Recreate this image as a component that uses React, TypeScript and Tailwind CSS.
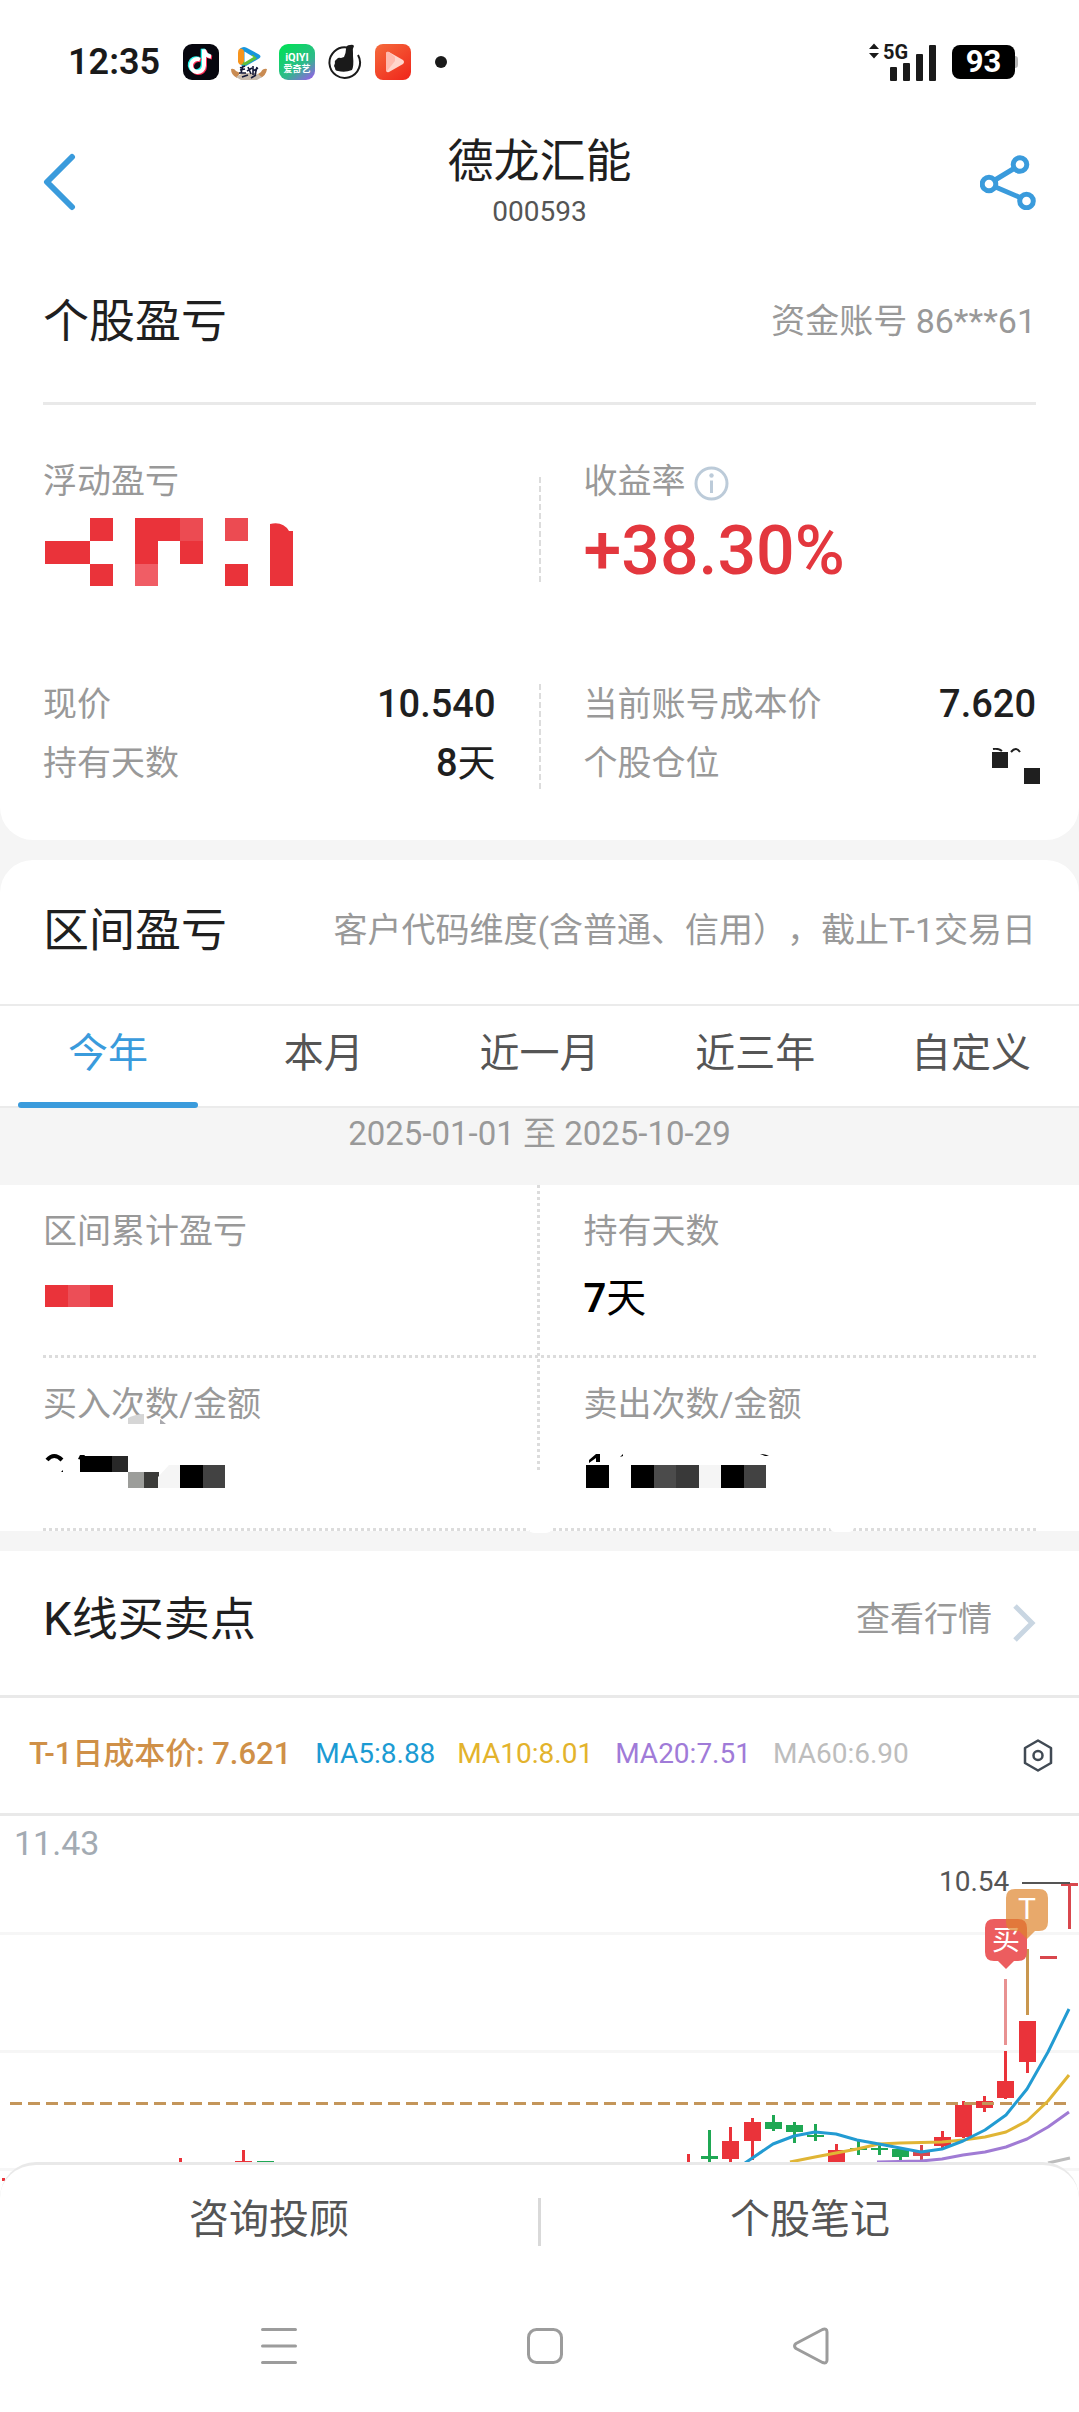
import React, { useState } from "react";

const FONT = "font-['Roboto','Noto_Sans_CJK_SC',sans-serif]";
const LABEL = "text-[34px] leading-[48px] text-[#999999]";
const TITLE = "text-[46px] leading-[52px] text-[#1f1f1f]";
const DOTS_X = "h-[3px] bg-[repeating-linear-gradient(90deg,#dcdcdc_0_3px,transparent_3px_6px)]";
const DOTS_Y = "w-[3px] bg-[repeating-linear-gradient(180deg,#dcdcdc_0_3px,transparent_3px_6px)]";
const DASH_Y = "w-[2px] bg-[repeating-linear-gradient(180deg,#dcdcdc_0_6px,transparent_6px_9px)]";

type Tile = [x: number, y: number, w: number, h: number, fill: string];

function Tiles({ tiles }: { tiles: Tile[] }) {
  return (
    <>
      {tiles.map(([x, y, w, h, fill]) => (
        <rect key={`${x}-${y}`} x={x} y={y} width={w} height={h} fill={fill} shapeRendering="crispEdges" />
      ))}
    </>
  );
}

function StatusBar() {
  return (
    <div className="flex h-[124px] items-center justify-between bg-white pl-[68px] pr-[61px] text-[#1a1a1a]">
      <div className="flex items-center">
        <span className="w-[115px] text-[36px] font-semibold leading-[40px]">12:35</span>
        <div className="flex items-center gap-3">
          <svg className="size-9" viewBox="0 0 36 36" aria-hidden="true">
            <rect width="36" height="36" rx="9" fill="#07070f" />
            <g fill="none" strokeWidth="4">
              <path d="M17 15.5a6.500 6.500 0 1 0 4 6V5.500c.5 4 3 6.500 7 7" stroke="#25f4ee" transform="translate(-1.300 -.8)" />
              <path d="M17 15.500a6.500 6.500 0 1 0 4 6V5.500c.5 4 3 6.500 7 7" stroke="#fe2c55" transform="translate(1 1)" />
              <path d="M17 15.500a6.500 6.500 0 1 0 4 6V5.500c.5 4 3 6.500 7 7" stroke="#ffffff" />
            </g>
          </svg>
          <svg className="size-9" viewBox="0 0 36 36" aria-hidden="true">
            <path d="M9 4.500q4-3 8 0l11 6q3 2 0 4L15 22q-5 1-6-3z" fill="#1796dd" />
            <path d="M9 4.500q-2 1-2 4v9q1 4 4 3l2-1V7q-1-3-4-2.500z" fill="#f7941d" />
            <path d="M11 20.500q2 2 5 0l10-6-4-4-9 7z" fill="#5fbf3a" />
            <path d="M13.500 7.500l9 5.500-9 5.500z" fill="#fff" />
            <path d="M0 25q3-1 5 2l4 2-3 5q-6-3-6-9zM36 25q-4-1-6 3l-3 2 2 4q6-2 7-9z" fill="#c98b52" />
            <path d="M5 33l7-4 13 0 6 4-5 3H10z" fill="#c9bcae" />
            <path d="M9 24l5-2m-2 0l-2 7m-1-3l5-1m-6 4h7M17 23l3 7m-4-3l5-3m1-2v9m0-4l5-3m-3 7l2-8m-15 10l6-2m3 3l5-3" stroke="#141a3a" strokeWidth="1.600" fill="none" />
          </svg>
          <svg className="size-9" viewBox="0 0 36 36" aria-hidden="true">
            <defs>
              <linearGradient id="iq" x1=".3" y1="0" x2="1" y2="1">
                <stop offset="0" stopColor="#06dc5c" />
                <stop offset=".55" stopColor="#2fb98a" />
                <stop offset="1" stopColor="#a352f5" />
              </linearGradient>
            </defs>
            <rect width="36" height="36" rx="9" fill="url(#iq)" />
            <text x="18" y="17" fontSize="11" fontWeight="700" fill="#fff" textAnchor="middle">iQIYI</text>
            <text x="18" y="27.500" fontSize="9" fontWeight="700" fill="#fff" textAnchor="middle">爱奇艺</text>
          </svg>
          <svg className="size-9" viewBox="0 0 36 36" aria-hidden="true">
            <path d="M20 3.500A15.300 15.300 0 1 0 31 11" fill="none" stroke="#1a1a1a" strokeWidth="2" />
            <path d="M10 15q1-2 4-1l3-1q2-4 2-8 0-4 4-4 3-1 4 1-2 3-1 7l0 3q1 10-1 14-7 3-14 1-3 0-3-3l-1-2 1-3q-1-2 2-4z" fill="#1a1a1a" />
          </svg>
          <svg className="size-9" viewBox="0 0 36 36" aria-hidden="true">
            <defs>
              <linearGradient id="vd" x1="0" y1="0" x2=".8" y2="1">
                <stop offset="0" stopColor="#f56b3c" />
                <stop offset="1" stopColor="#f02a1d" />
              </linearGradient>
            </defs>
            <rect width="36" height="36" rx="8" fill="url(#vd)" />
            <path d="M11 10q0-3 3-2l14 8q2 2 0 4l-14 8q-3 1-3-2z" fill="#ffd5cd" />
            <path d="M11 10q0-3 3-2l6 5v4L12 27q-1 0-1-1z" fill="#ffb9ad" />
          </svg>
        </div>
        <span className="ml-6 size-3 rounded-full bg-[#1a1a1a]" />
      </div>
      <div className="flex items-center gap-4">
        <svg className="h-[46px] w-[67px] -mt-2" viewBox="0 -8 67 46" fill="#1a1a1a" aria-label="5G">
          <path d="M0 6l5-5.500L10 6zM0 10l5 5.500L10 10z" />
          <text x="14" y="16" fontSize="20" fontWeight="700">5G</text>
          <rect x="21" y="24" width="7" height="14" rx="1" />
          <rect x="34" y="20" width="7" height="18" rx="1" />
          <rect x="47" y="11" width="7" height="27" rx="1" />
          <rect x="60" y="2" width="7" height="36" rx="1" />
        </svg>
        <div className="flex items-center">
          <span className="flex h-[34px] w-[63px] items-center justify-center rounded-[8px] bg-black text-[31px] font-bold leading-[34px] text-white">93</span>
          <span className="h-3 w-[3px] rounded-r-[3px] bg-[#b5b5b5]" />
        </div>
      </div>
    </div>
  );
}

function Header() {
  return (
    <header className="grid h-[116px] grid-cols-[1fr_auto_1fr] items-center bg-white px-[43px]">
      <button aria-label="返回" className="justify-self-start">
        <svg className="h-[58px] w-[33px]" viewBox="0 0 33 58" fill="none" stroke="#3a9bdc" strokeWidth="6" strokeLinecap="round" strokeLinejoin="round">
          <path d="M29 4L4 29l25 25" />
        </svg>
      </button>
      <div className="text-center">
        <h1 className={TITLE}>德龙汇能</h1>
        <p className="mt-2 text-[28px] leading-[34px] text-[#555555]">000593</p>
      </div>
      <button aria-label="分享" className="justify-self-end">
        <svg className="h-[56px] w-[56px]" viewBox="0 0 56 56" fill="none" stroke="#3a9bdc" strokeWidth="5">
          <circle cx="9" cy="30" r="6.800" />
          <circle cx="40" cy="10.500" r="6.800" />
          <circle cx="46.500" cy="47" r="6.800" />
          <path d="M15 26l19-11.500M15.500 33l24.500 10.500" />
        </svg>
      </button>
    </header>
  );
}

function PositionCard() {
  return (
    <section className="rounded-b-[33px] bg-white px-[43px] pb-[47px]">
      <div className="flex h-[162px] items-center justify-between">
        <h2 className={TITLE}>个股盈亏</h2>
        <span className={LABEL}>资金账号 86***61</span>
      </div>
      <div className="h-[3px] bg-[#e9e9e9]" />
      <div className="mt-[52px] grid grid-cols-[1fr_2px_1fr] gap-x-[43px]">
        <div>
          <p className={LABEL}>浮动盈亏</p>
          <svg className="ml-[2px] mt-[13px] h-[68px] w-[248px]" viewBox="0 0 248 68" role="img" aria-label="已隐藏">
            <Tiles
              tiles={[
                [45, 0, 23, 23, "#ea333a"], [90, 0, 45, 23, "#ea333a"], [135, 0, 23, 23, "#ec4b52"], [180, 0, 23, 23, "#ec4b52"],
                [0, 23, 45, 23, "#ea333a"], [90, 23, 23, 23, "#ea333a"], [135, 23, 23, 23, "#ea333a"],
                [45, 46, 23, 22, "#ea333a"], [90, 46, 23, 22, "#f05d65"], [180, 46, 23, 22, "#ea333a"],
              ]}
            />
            <path d="M225 68V6q13-3 19 7h4v55z" fill="#ea333a" />
          </svg>
        </div>
        <div className={`mt-5 h-[108px] ${DASH_Y}`} />
        <div>
          <p className={`flex items-center gap-2 ${LABEL}`}>
            收益率
            <button aria-label="收益率说明">
              <svg className="mt-1 size-[35px]" viewBox="0 0 35 35" fill="none" stroke="#bccbd9" strokeWidth="3">
                <circle cx="17.500" cy="17.500" r="15.500" />
                <path d="M17.500 14.500V27" />
                <circle cx="17.500" cy="9.500" r="2.200" fill="#bccbd9" stroke="none" />
              </svg>
            </button>
          </p>
          <p className="text-[68px] font-medium leading-[92px] text-[#e3373e]">+38.30%</p>
        </div>
      </div>
      <div className="mt-[78px] grid grid-cols-[1fr_2px_1fr] gap-x-[43px]">
        <dl className="grid grid-cols-[auto_1fr] leading-[59px]">
          <dt className="text-[34px] text-[#999999]">现价</dt>
          <dd className="text-right text-[38px] font-medium text-[#1f1f1f]">10.540</dd>
          <dt className="text-[34px] text-[#999999]">持有天数</dt>
          <dd className="text-right text-[38px] text-[#1f1f1f]"><span className="font-medium">8</span>天</dd>
        </dl>
        <div className={`mt-[9px] h-[108px] ${DASH_Y}`} />
        <dl className="grid grid-cols-[auto_1fr] leading-[59px]">
          <dt className="text-[34px] text-[#999999]">当前账号成本价</dt>
          <dd className="text-right text-[38px] font-medium text-[#1f1f1f]">7.620</dd>
          <dt className="text-[34px] text-[#999999]">个股仓位</dt>
          <dd className="flex justify-end pt-[14px]">
            <svg className="-mr-1 h-[36px] w-[48px]" viewBox="0 0 48 36" role="img" aria-label="已隐藏">
              <Tiles tiles={[[0, 4, 16, 16, "#1f1f1f"], [32, 20, 16, 16, "#1f1f1f"]]} />
              <path d="M1 1q5-1 9 2M19 4q5-6 9 0" fill="none" stroke="#1f1f1f" strokeWidth="2" />
            </svg>
          </dd>
        </dl>
      </div>
    </section>
  );
}

const TABS = ["今年", "本月", "近一月", "近三年", "自定义"];

function RangeCard() {
  const [active, setActive] = useState(0);
  return (
    <section className="mt-5 rounded-t-[33px] bg-white">
      <div className="flex h-[144px] items-center justify-between px-[43px] pb-1">
        <h2 className={TITLE}>区间盈亏</h2>
        <span className={`whitespace-nowrap [text-spacing-trim:space-all] ${LABEL}`}>客户代码维度(含普通、信用），截止T-1交易日</span>
      </div>
      <div role="tablist" className="grid h-[104px] grid-cols-5 border-y-2 border-[#ebebeb]">
        {TABS.map((tab, i) => (
          <button
            key={tab}
            role="tab"
            aria-selected={i === active}
            onClick={() => setActive(i)}
            className={`relative pb-1 text-[40px] leading-[48px] ${i === active ? "text-[#3a9bdc]" : "text-[#555555]"}`}
          >
            {tab}
            {i === active && <span className="absolute inset-x-[18px] -bottom-[2px] h-[6px] rounded-full bg-[#3a9bdc]" />}
          </button>
        ))}
      </div>
      <p className="h-[77px] bg-[#f5f5f5] text-center text-[33px] leading-[52px] text-[#999999]">2025-01-01 至 2025-10-29</p>
      <div className="relative px-[43px]">
        <div className={`absolute left-1/2 top-0 -ml-[3px] h-[285px] ${DOTS_Y}`} />
        <div className="grid h-[170px] grid-cols-2 gap-x-[88px] pt-[22px]">
          <div>
            <p className={LABEL}>区间累计盈亏</p>
            <svg className="ml-[2px] mt-[30px] h-[22px] w-[68px]" viewBox="0 0 68 22" role="img" aria-label="已隐藏">
              <Tiles tiles={[[0, 0, 23, 22, "#ea333a"], [23, 0, 22, 22, "#ec4e57"], [45, 0, 23, 22, "#ea333a"]]} />
            </svg>
          </div>
          <div>
            <p className={LABEL}>持有天数</p>
            <p className="mt-4 text-[40px] leading-[56px] text-black"><span className="font-semibold">7</span>天</p>
          </div>
        </div>
        <div className={DOTS_X} />
        <div className="grid h-[170px] grid-cols-2 gap-x-[88px] pt-[22px]">
          <div>
            <p className={LABEL}>买入次数/金额</p>
            <svg className="-mt-[14px] ml-[2px] h-[74px] w-[180px]" viewBox="0 0 180 74" role="img" aria-label="已隐藏">
              <Tiles
                tiles={[
                  [35, 42, 32, 16, "#000000"], [67, 42, 16, 16, "#282828"],
                  [83, 58, 16, 16, "#9c9d9a"], [99, 58, 15, 16, "#3b3b39"],
                  [135, 51, 23, 23, "#000000"], [158, 51, 22, 23, "#424242"],
                ]}
              />
              <path d="M113 74V63l11-12h11v23z" fill="#f5f5f5" />
              <path d="M83 10V4q8-4 16-4v10z" fill="#d6d6d6" />
              <path d="M115 10V5l6 5z" fill="#a9a9ae" />
              <path d="M2 46q7-8 15 0" fill="none" stroke="#000000" strokeWidth="4" />
              <path d="M33 45l2-4h5l-3 5zM18 56v2h-2z" fill="#000000" />
            </svg>
          </div>
          <div>
            <p className={LABEL}>卖出次数/金额</p>
            <svg className="ml-[2px] mt-[26px] h-[34px] w-[184px]" viewBox="0 0 184 34" role="img" aria-label="已隐藏">
              <Tiles
                tiles={[
                  [0, 11, 23, 23, "#000000"], [45, 11, 23, 23, "#000000"], [68, 11, 22, 23, "#4b4b4b"], [90, 11, 23, 23, "#393939"],
                  [113, 11, 22, 23, "#f5f5f5"], [135, 11, 23, 23, "#000000"], [158, 11, 22, 23, "#424242"],
                ]}
              />
              <path d="M3 9V6l7-6h4v8h-4V4zM34 3l3-3v2zM174 0q6 0 9 2h-4z" fill="#000000" />
            </svg>
          </div>
        </div>
        <div className={DOTS_X} />
        <span className="absolute -bottom-[2px] left-1/2 -ml-[12px] h-[6px] w-[24px] rounded-b-full bg-white" />
        <span className="absolute -bottom-px left-[78%] -ml-[12px] h-[5px] w-[24px] rounded-b-full bg-white" />
      </div>
    </section>
  );
}

const RED = "#ea333a";
const GREEN = "#1fa854";

// Centre x, high, low, body top, body bottom, colour
const CANDLES: [number, number, number, number, number, string][] = [
  [180, 2158, 2180, 2170, 2180, RED],
  [243, 2150, 2180, 2161, 2180, RED],
  [265, 2161, 2180, 2161, 2180, GREEN],
  [688, 2154, 2180, 2172, 2180, RED],
  [709, 2130, 2170, 2156, 2159, GREEN],
  [730, 2127, 2170, 2141, 2159, RED],
  [752, 2118, 2160, 2122, 2141, RED],
  [773, 2115, 2131, 2122, 2129, GREEN],
  [794, 2122, 2143, 2125, 2132, GREEN],
  [815, 2124, 2141, 2135, 2137, GREEN],
  [836, 2144, 2170, 2150, 2170, RED],
  [858, 2141, 2155, 2148, 2150, GREEN],
  [879, 2145, 2155, 2148, 2150, GREEN],
  [900, 2147, 2161, 2149, 2157, GREEN],
  [921, 2145, 2160, 2152, 2156, "#d9474d"],
  [942, 2131, 2149, 2137, 2146, RED],
  [963, 2101, 2138, 2105, 2137, RED],
  [984, 2096, 2112, 2101, 2108, RED],
  [1005, 2051, 2099, 2081, 2098, RED],
  [1027, 2021, 2073, 2021, 2062, RED],
  [1048, 1956, 1959, 1956, 1959, "#d9474d"],
  [1069, 1883, 1929, 1883, 1886, "#d9474d"],
];

function KLineChart() {
  return (
    <svg className="block h-auto w-full" viewBox="0 1816 1079 394" role="img" aria-label="K线图">
      <g fill="#f6f6f6">
        <rect y="1932" width="1079" height="3" />
        <rect y="2050" width="1079" height="3" />
        <rect y="2168" width="1079" height="3" />
      </g>
      <text x="14" y="1855" fontSize="34" fill="#a3abb3">11.43</text>
      <text x="939" y="1891" fontSize="28" fill="#555555">10.54</text>
      <rect x="2" y="2178" width="3" height="3" fill={RED} />
      {CANDLES.map(([x, high, low, top, bottom, color]) => (
        <g key={x} fill={color}>
          <rect x={x - 1} y={high} width="3" height={low - high} />
          <rect x={x - 8} y={top} width="17" height={bottom - top} />
        </g>
      ))}
      <rect x="1022" y="1882" width="48" height="2" fill="#555555" />
      <path d="M10 2103.500H1068" stroke="#c4965a" strokeWidth="3" strokeDasharray="12 6" />
      <g fill="none" strokeWidth="3" strokeLinejoin="round">
        <path stroke="#bdbdbd" d="M1048 2163L1070 2158" />
        <path stroke="#a07bd4" d="M877 2162L921 2161L942 2159L963 2155L985 2152L1006 2147L1027 2139L1048 2127L1069 2112" />
        <path stroke="#e0b535" d="M790 2162L815 2157L836 2153L857 2149L879 2144L900 2143L942 2142L963 2140L985 2137L1006 2132L1027 2121L1048 2101L1069 2075" />
        <path stroke="#229bd2" d="M745 2163L773 2144L794 2136L815 2132L836 2134L857 2140L879 2144L900 2148L921 2152L942 2149L963 2141L985 2130L1006 2115L1027 2089L1048 2052L1069 2009" />
        <path stroke="#e89292" d="M1005.500 1979V2045" />
        <path stroke="#c9974f" d="M1027.500 1949V2015" />
      </g>
      <path d="M994 1919h24q9 0 9 9v24q0 9-9 9h-4l-8 8-8-8h-4q-9 0-9-9v-24q0-9 9-9z" fill="#ec5d5f" />
      <text x="1006" y="1950" fontSize="28" fill="#ffffff" textAnchor="middle">买</text>
      <path d="M1015 1889h24q9 0 9 9v24q0 9-9 9h-4l-8 8-8-8h-4q-9 0-9-9v-24q0-9 9-9z" fill="#de852c" fillOpacity="0.7" />
      <text x="1027" y="1919" fontSize="30" fill="#ffffff" textAnchor="middle">T</text>
    </svg>
  );
}

function KLineCard() {
  return (
    <section className="mt-5 bg-white">
      <div className="flex h-[144px] items-center justify-between px-[43px] pb-2">
        <h2 className={TITLE}>K线买卖点</h2>
        <a href="#quote" className={`flex items-center gap-5 ${LABEL}`}>
          查看行情
          <svg className="mt-2 h-[38px] w-[24px]" viewBox="0 0 24 38" fill="none" stroke="#c9d6e2" strokeWidth="5">
            <path d="M3 2l17 17L3 36" />
          </svg>
        </a>
      </div>
      <div className="flex h-[121px] items-center gap-6 whitespace-nowrap border-y-[3px] border-[#e9e9e9] pb-1 pl-[29px] pr-[26px] text-[28px] leading-[40px]">
        <span className="text-[31px] font-medium text-[#cf9048]">T-1日成本价: 7.621</span>
        <div className="flex gap-[22px]">
          <span className="text-[#1c9bd3]">MA5:8.88</span>
          <span className="text-[#e3b32c]">MA10:8.01</span>
          <span className="text-[#a07bd8]">MA20:7.51</span>
          <span className="text-[#bdbdbd]">MA60:6.90</span>
        </div>
        <button aria-label="图表设置" className="ml-auto">
          <svg className="mt-1 h-[33px] w-[30px]" viewBox="0 0 30 33" fill="none" stroke="#414a54" strokeWidth="2.500" strokeLinejoin="round">
            <path d="M15 1.500L28 9v15L15 31.500 2 24V9z" />
            <circle cx="15" cy="16.500" r="4.500" />
          </svg>
        </button>
      </div>
      <KLineChart />
    </section>
  );
}

function BottomSheet() {
  return (
    <footer className="relative -mt-[48px] rounded-t-[36px] border-t-[3px] border-[#e9e9e9] bg-white">
      <div className="flex h-[114px] items-center text-[40px] leading-[52px] text-[#555555]">
        <button className="flex-1 pb-1">咨询投顾</button>
        <span className="h-12 w-[3px] bg-[#d9d9d9]" />
        <button className="flex-1 pb-1">个股笔记</button>
      </div>
      <nav className="flex h-[133px] items-center justify-between pl-[24%] pr-[23%]">
        <button aria-label="最近任务">
          <svg className="size-10" viewBox="0 0 40 40" stroke="#9c9c9c" strokeWidth="3" strokeLinecap="round">
            <path d="M3.500 3.500h33M3.500 20h33M3.500 36.500h33" />
          </svg>
        </button>
        <button aria-label="主屏幕">
          <svg className="size-10" viewBox="0 0 40 40" fill="none" stroke="#9c9c9c" strokeWidth="3">
            <rect x="3.500" y="3.500" width="33" height="33" rx="8" />
          </svg>
        </button>
        <button aria-label="系统返回">
          <svg className="size-10" viewBox="0 0 40 40" fill="none" stroke="#9c9c9c" strokeWidth="3" strokeLinejoin="round">
            <path d="M31.500 3.500Q36 2 36 6V34Q36 38 31.500 36.500L5 22.500Q2 20 5 17.500z" />
          </svg>
        </button>
      </nav>
    </footer>
  );
}

export default function App() {
  return (
    <div lang="zh-CN" className={`bg-[#f5f5f5] ${FONT}`}>
      <StatusBar />
      <Header />
      <main>
        <PositionCard />
        <RangeCard />
        <KLineCard />
      </main>
      <BottomSheet />
    </div>
  );
}
